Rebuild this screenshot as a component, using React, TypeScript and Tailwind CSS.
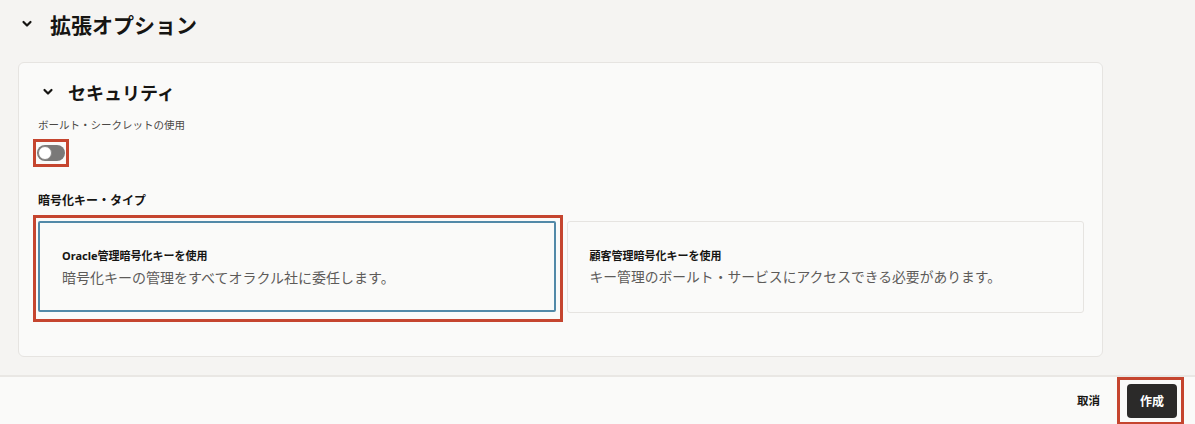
import React from "react";

const font = { fontFamily: '"Noto Sans CJK JP", "Noto Sans", sans-serif' };

function Chevron({ className }: { className?: string }) {
  return (
    <svg className={className} width="12" height="8" viewBox="0 0 12 8" fill="none">
      <path d="M2.5 2 L6 5.5 L9.5 2" stroke="#161513" strokeWidth="2.2" strokeLinecap="round" strokeLinejoin="round" />
    </svg>
  );
}

export default function App() {
  return (
    <div
      className="w-[1195px] h-[424px] bg-[#f5f4f2] flex flex-col overflow-hidden text-[#161513]"
      style={font}
    >
      <div className="flex-1 pl-[18px] pr-[92px]">
        <div className="h-[48px] flex items-center">
          <Chevron className="ml-[3px]" />
          <span className="ml-[17px] text-[21px] font-bold leading-none">拡張オプション</span>
        </div>
        <div className="mt-[14px] h-[295px] rounded-[6px] border border-[#e6e4e1] bg-[#fafaf9] pl-[19px] pr-[18px]">
          <div className="h-[58px] flex items-center pl-[4px]">
            <Chevron />
            <span className="ml-[14px] text-[18px] font-bold leading-none">セキュリティ</span>
          </div>
          <div className="text-[10.5px] leading-none text-[#4a4846] mt-[-1px]">ボールト・シークレットの使用</div>
          <div className="mt-[8px] inline-flex border-[3px] border-[#c5452f] px-[1px] py-[3px] ml-[-5px]">
            <div className="w-[28px] h-[16px] rounded-full bg-[#7a7978] flex items-center px-[1px]">
              <div className="w-[14px] h-[14px] rounded-full bg-white border border-[#8a8988]" />
            </div>
          </div>
          <div className="mt-[27px] text-[12px] font-bold leading-none">暗号化キー・タイプ</div>
          <div className="mt-[15px] grid grid-cols-2 gap-[11px]">
            <div className="relative">
              <div className="h-[91px] rounded-[2px] border-2 border-[#5289a8] bg-[#fafaf9] pl-[22px] pt-[27px]">
                <div className="text-[11px] font-bold leading-none" style={{ fontFamily: '"Noto Sans", "Noto Sans CJK JP", sans-serif' }}>
                  Oracle管理暗号化キーを使用
                </div>
                <div className="mt-[9px] text-[14px] leading-none text-[#5d5b59]">
                  暗号化キーの管理をすべてオラクル社に委任します。
                </div>
              </div>
              <div className="absolute -left-[5px] -top-[6px] -right-[7px] -bottom-[9px] border-[3px] border-[#c5452f] pointer-events-none" />
            </div>
            <div className="h-[92px] rounded-[3px] border border-[#e6e4e1] bg-[#fafaf9] pl-[22px] pt-[28px]">
              <div className="text-[11px] font-bold leading-none">顧客管理暗号化キーを使用</div>
              <div className="mt-[9px] text-[13.8px] leading-none text-[#5d5b59]">
                キー管理のボールト・サービスにアクセスできる必要があります。
              </div>
            </div>
          </div>
        </div>
      </div>
      <div className="h-[49px] border-t-2 border-[#e9e7e4] bg-[#fafaf9] flex items-center justify-end pr-[18px]">
        <span className="text-[11.5px] font-bold leading-none mr-[27px]">取消</span>
        <div className="relative">
          <button className="w-[50px] h-[34px] rounded-[4px] bg-[#2b2a29] text-white text-[12px] font-bold leading-none">
            作成
          </button>
          <div className="absolute -left-[10px] -top-[7px] -right-[7px] -bottom-[7px] border-[3px] border-[#c5452f] pointer-events-none" />
        </div>
      </div>
    </div>
  );
}
